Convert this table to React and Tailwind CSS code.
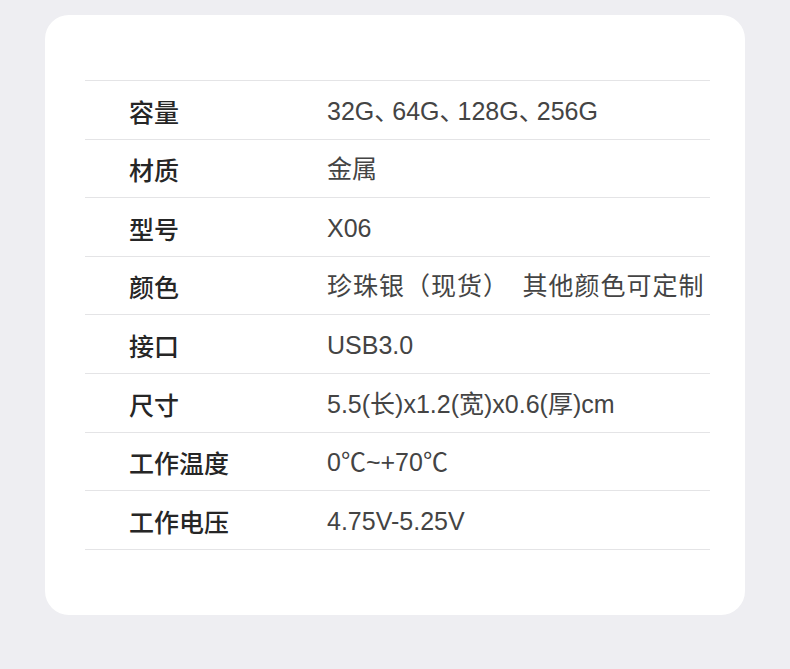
import React from 'react';

const specs = [
  { label: '容量', value: '32G、64G、128G、256G' },
  { label: '材质', value: '金属' },
  { label: '型号', value: 'X06' },
  { label: '颜色', value: '珍珠银（现货）　其他颜色可定制', wide: true },
  { label: '接口', value: 'USB3.0' },
  { label: '尺寸', value: '5.5(长)x1.2(宽)x0.6(厚)cm' },
  { label: '工作温度', value: '0℃~+70℃' },
  { label: '工作电压', value: '4.75V-5.25V' },
];

// the 、 in the reference is set tighter than a full-width box
function Value({ text }) {
  const parts = text.split('、');
  return parts.map((p, i) => (
    <React.Fragment key={i}>
      {p}
      {i < parts.length - 1 && <span className="tracking-[-7px]">、</span>}
    </React.Fragment>
  ));
}

export default function App() {
  return (
    <div
      className="w-[790px] h-[669px] bg-[#eeeef2] pt-[15px] pl-[45px]"
      style={{ fontFamily: '"Noto Sans CJK SC", "Noto Sans", sans-serif' }}
    >
      <div className="w-[700px] h-[600px] bg-white rounded-[24px] pt-[65px] pl-[40px] pr-[35px]">
        <div className="border-t border-[#e4e4e6]">
          {specs.map(row => (
            <div
              key={row.label}
              className="h-[58.6px] border-b border-[#e4e4e6] flex items-center pl-[44px] pt-[3px]"
            >
              <span className="w-[198px] shrink-0 text-[25px] text-[#262626] font-medium">
                {row.label}
              </span>
              <span
                className={`text-[25px] text-[#444] whitespace-nowrap ${row.wide ? 'tracking-[1px]' : ''}`}
                style={{ fontFamily: '"Liberation Sans", "Noto Sans CJK SC", sans-serif' }}
              >
                <Value text={row.value} />
              </span>
            </div>
          ))}
        </div>
      </div>
    </div>
  );
}
